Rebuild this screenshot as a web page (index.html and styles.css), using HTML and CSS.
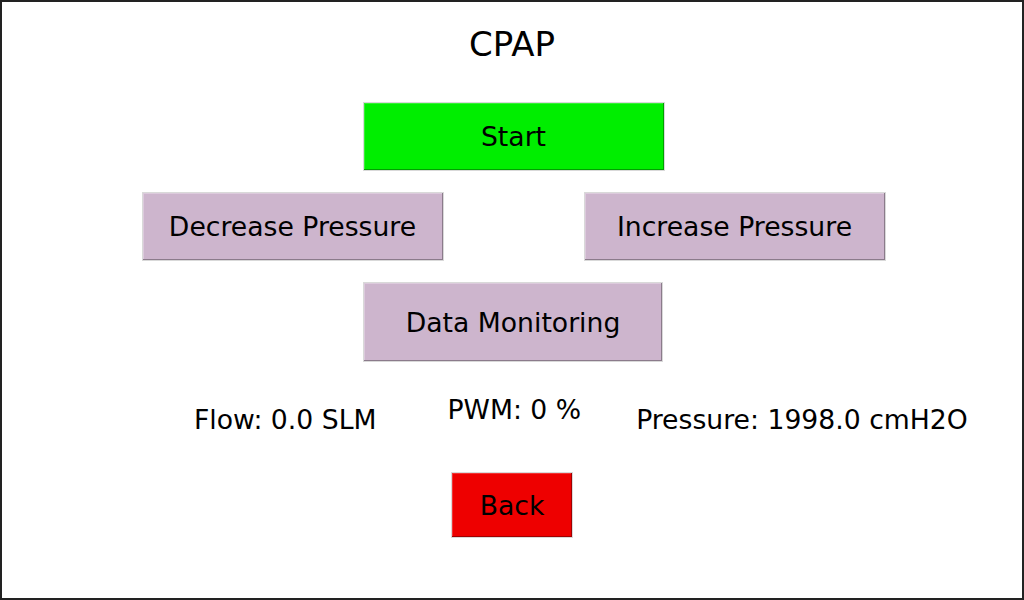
FILE: index.html
```html
<!DOCTYPE html>
<html lang="en">
<head>
    <meta charset="UTF-8">
    <title>CPAP</title>
    <link rel="stylesheet" href="styles.css">
</head>
<body>
    <div class="window">
        <h1 class="title">CPAP</h1>

        <button class="btn btn-start">Start</button>

        <div class="pressure-row">
            <button class="btn btn-purple">Decrease Pressure</button>
            <button class="btn btn-purple">Increase Pressure</button>
        </div>

        <button class="btn btn-purple btn-data">Data Monitoring</button>

        <div class="readings">
            <span class="reading reading-flow">Flow: 0.0 SLM</span>
            <span class="reading reading-pwm">PWM: 0 %</span>
            <span class="reading reading-pressure">Pressure: 1998.0 cmH2O</span>
        </div>

        <button class="btn btn-back">Back</button>
    </div>
</body>
</html>
```

FILE: styles.css
```css
body {
    margin: 0;
    font-family: 'DejaVu Sans', sans-serif;
    background: #ffffff;
}
.window {
    width: 1024px;
    height: 600px;
    box-sizing: border-box;
    border: 2px solid #222222;
    background: #ffffff;
    display: flex;
    flex-direction: column;
    align-items: center;
}
.title {
    margin: 22px 0 0 0;
    font-size: 34px;
    font-weight: normal;
    line-height: 40px;
    color: #000000;
}
.btn {
    box-sizing: border-box;
    width: 302px;
    height: 69px;
    padding: 0;
    border: 1px solid #d9d9d9;
    font-family: 'DejaVu Sans', sans-serif;
    font-size: 26.67px;
    color: #000000;
    cursor: pointer;
}
.btn-start {
    margin-top: 38px;
    margin-left: 3px;
    background: #00ee00;
    box-shadow: inset -1px -1px 0 #00a000, inset 1px 1px 0 #33f233;
}
.btn-purple {
    background: #cdb5cd;
    box-shadow: inset -1px -1px 0 #8b7b8b, inset 1px 1px 0 #dccadc;
}
.pressure-row {
    display: flex;
    gap: 140px;
    margin-top: 21px;
    margin-left: 3px;
}
.btn-data {
    width: 300px;
    height: 80px;
    margin-top: 21px;
    margin-left: 2px;
}
.readings {
    align-self: stretch;
    display: flex;
    align-items: flex-start;
    padding-left: 192px;
    margin-top: 33px;
}
.reading {
    font-size: 26.67px;
    line-height: 30px;
    color: #000000;
    white-space: nowrap;
}
.reading-flow {
    margin-top: 10px;
}
.reading-pwm {
    margin-left: 71px;
}
.reading-pressure {
    margin-top: 10px;
    margin-left: 55px;
}
.btn-back {
    width: 122px;
    height: 66px;
    margin-top: 37px;
    background: #ee0000;
    box-shadow: inset -1px -1px 0 #a00000, inset 1px 1px 0 #f23333;
}
```
